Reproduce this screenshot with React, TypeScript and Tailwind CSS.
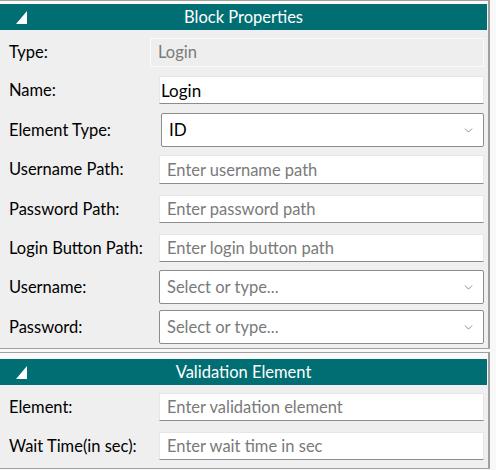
import { ChevronDown } from 'lucide-react';

const Triangle = () => (
  <svg width="11" height="13" viewBox="0 0 11 13" className="block">
    <polygon points="11,0 11,13 0,13" fill="#ffffff" />
  </svg>
);

const Header = ({ title }: { title: string }) => (
  <div className="relative h-[26px] bg-[#006e73] flex items-center justify-center text-white text-[16.5px]">
    <span className="absolute left-[16px] top-[7px]">
      <Triangle />
    </span>
    {title}
  </div>
);

const Label = ({ text }: { text: string }) => (
  <div className="w-[159px] pl-[9px] text-[16.5px] text-black shrink-0">{text}</div>
);

const TextField = ({ placeholder, h = 'h-[29px]' }: { placeholder?: string; h?: string }) => (
  <input
    readOnly
    placeholder={placeholder}
    className={`${h} flex-1 min-w-0 bg-white border border-[#e6e6e6] border-b-[#8c8c8c] outline-none px-[7px] text-[16.5px] text-black placeholder:text-[#7a7a7a]`}
  />
);

const SelectField = ({ text, placeholder }: { text?: string; placeholder?: boolean }) => (
  <div className="h-[34px] flex-1 flex items-center justify-between bg-white border border-[#8c8c8c] rounded-[2px] pl-[7px] pr-[8px]">
    <span className={placeholder ? 'text-[16.5px] text-[#7a7a7a]' : 'text-[17px] text-black'}>{text}</span>
    <ChevronDown size={13} strokeWidth={1.2} className="text-[#555]" />
  </div>
);

export default function App() {
  return (
    <div className="w-[496px] h-[470px] bg-[#f8f8f8] font-['Lato',sans-serif] overflow-hidden">
      {/* Block Properties */}
      <div className="w-[490px] border-t border-r-2 border-b border-[#a0a0a0] bg-[#fafafa]">
        <div className="pt-[3px] pr-[1px]">
          <Header title="Block Properties" />
        </div>
        <div className="bg-[#efefef] pr-[4px] pb-[4px]">
          <div className="flex items-center pt-[8px]">
            <div className="w-[150px] pl-[9px] text-[16.5px] text-black shrink-0">Type:</div>
            <div className="h-[29px] flex-1 flex items-center bg-[#eeeeee] border border-[#fafafa] px-[7px] text-[16.5px] text-[#7a7a7a]">
              Login
            </div>
          </div>
          <div className="flex items-center mt-[9px]">
            <Label text="Name:" />
            <input
              readOnly
              value="Login"
              className="h-[28px] flex-1 min-w-0 bg-white border border-[#e6e6e6] border-b-[#8c8c8c] outline-none px-[1px] text-[17px] text-black"
            />
          </div>
          <div className="flex items-center mt-[9px]">
            <Label text="Element Type:" />
            <div className="flex-1 pl-[2px] flex">
              <SelectField text="ID" />
            </div>
          </div>
          <div className="flex items-center mt-[8px]">
            <Label text="Username Path:" />
            <TextField placeholder="Enter username path" />
          </div>
          <div className="flex items-center mt-[11px]">
            <Label text="Password Path:" />
            <TextField placeholder="Enter password path" h="h-[28px]" />
          </div>
          <div className="flex items-center mt-[11px]">
            <Label text="Login Button Path:" />
            <TextField placeholder="Enter login button path" h="h-[28px]" />
          </div>
          <div className="flex items-center mt-[8px]">
            <Label text="Username:" />
            <SelectField text="Select or type..." placeholder />
          </div>
          <div className="flex items-center mt-[6px]">
            <Label text="Password:" />
            <SelectField text="Select or type..." placeholder />
          </div>
        </div>
      </div>

      {/* Validation Element */}
      <div className="w-[490px] mt-[3px] border-t border-r-2 border-b border-[#a0a0a0] bg-[#fafafa]">
        <div className="pt-[6px] pr-[1px]">
          <Header title="Validation Element" />
        </div>
        <div className="bg-[#efefef] pr-[4px] pb-[8px]">
          <div className="flex items-center pt-[8px]">
            <Label text="Element:" />
            <TextField placeholder="Enter validation element" h="h-[28px]" />
          </div>
          <div className="flex items-center mt-[11px]">
            <Label text="Wait Time(in sec):" />
            <TextField placeholder="Enter wait time in sec" h="h-[28px]" />
          </div>
        </div>
      </div>
    </div>
  );
}
